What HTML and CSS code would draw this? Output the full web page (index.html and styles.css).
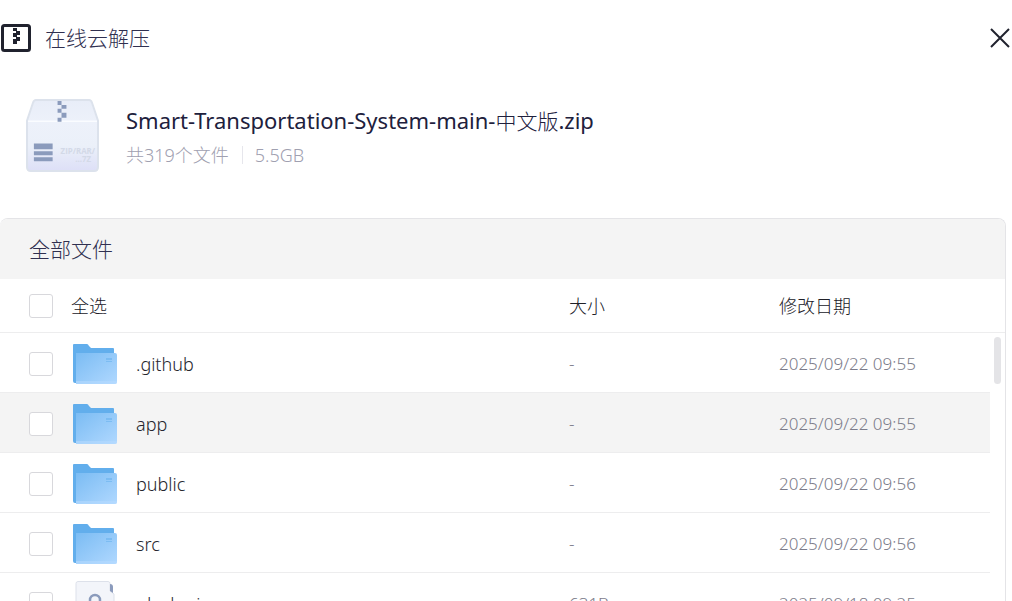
FILE: index.html
```html
<!DOCTYPE html>
<html lang="zh-CN">
<head>
<meta charset="utf-8">
<meta name="viewport" content="width=device-width, initial-scale=1">
<title>在线云解压</title>
<link rel="stylesheet" href="styles.css">
</head>
<body>
<svg class="defs" aria-hidden="true">
  <defs>
    <linearGradient id="folderFront" x1="0" y1="0" x2="1" y2="1">
      <stop offset="0" stop-color="#7bbcf3"/><stop offset="1" stop-color="#b0d8ff"/>
    </linearGradient>
    <symbol id="folder" viewBox="0 0 44 41">
      <path d="M0 2q0-1 1-1h13q1 0 2 2l2 2h22q1 0 1 1v34H2q-2 0-2-2z" fill="#62aeec"/>
      <path d="M3 10h39q2 0 2 2v27q0 2-2 2H3z" fill="url(#folderFront)"/>
      <path d="M3 38h41v1q0 2-2 2H3z" fill="#b5dbff" opacity=".6"/>
      <path d="M33 15h6v2h-6zM33 18h6v1h-6z" fill="#62aeec" opacity=".5"/>
    </symbol>
  </defs>
</svg>
<main class="dialog">
  <header class="titlebar">
    <svg class="logo" viewBox="0 0 30 28" aria-hidden="true">
      <rect x="1.500" y="1.500" width="27" height="25" rx="2" fill="#fff" stroke="#20222e" stroke-width="3"/>
      <path d="M12 4h4v3h3v4h-3v2h3v4h-3v3h-4v-5h3v-2h-3V9h3V7h-3z" fill="#20222e"/>
    </svg>
    <h1 class="heading">在线云解压</h1>
    <button class="close" type="button" aria-label="关闭">
      <svg viewBox="0 0 20 20" aria-hidden="true"><path d="M1 1l18 18M19 1L1 19" stroke="#20222e" stroke-width="2" fill="none"/></svg>
    </button>
  </header>

  <section class="archive">
    <svg class="archive-icon" viewBox="0 0 74 74" aria-hidden="true">
      <defs><linearGradient id="box" x1="0" y1="0" x2="0" y2="1">
        <stop offset="0" stop-color="#e8edf8"/><stop offset=".3" stop-color="#edf1fa"/><stop offset=".65" stop-color="#ebf0f9"/><stop offset="1" stop-color="#dddff7"/>
      </linearGradient></defs>
      <path d="M10 1h54q2 0 3 3l6 18v47q0 4-4 4H5q-4 0-4-4V22L7 4q1-3 3-3z" fill="url(#box)" stroke="#dce2ec" stroke-width="2"/>
      <path d="M2 22.500h70" stroke="#fafcff" stroke-width="1.500"/>
      <path d="M32 2h4v4h-4zM36 6h5v4h-5zM32 10h4v4h-4zM36 14h5v5h-5zM32 19h4v4h-4zM8 45h19v6H8zM8 53h19v4H8zM8 59h19v4H8z" fill="#8b9bbc"/>
      <g class="box-label"><text x="70" y="56" text-anchor="end">ZIP/RAR/</text><text x="66" y="64" text-anchor="end">...7Z</text></g>
    </svg>
    <div class="archive-info">
      <h2 class="archive-name">Smart-Transportation-System-main-<span class="cjk">中文版</span>.zip</h2>
      <p class="archive-meta"><span>共319个文件</span><span class="size">5.5GB</span></p>
    </div>
  </section>

  <section class="panel">
    <h3 class="panel-title">全部文件</h3>
    <table class="files">
      <thead>
        <tr>
          <th class="pick"><input id="all" class="check" type="checkbox"></th>
          <th class="name"><label for="all">全选</label></th>
          <th class="bytes">大小</th>
          <th class="date">修改日期</th>
          <th class="gutter"><span class="thumb"></span></th>
        </tr>
      </thead>
      <tbody>
        <tr>
          <td class="pick"><input id="f1" class="check" type="checkbox"></td>
          <td><label class="file" for="f1"><svg class="folder" aria-hidden="true"><use href="#folder"/></svg>.github</label></td>
          <td class="muted">-</td><td class="muted">2025/09/22 09:55</td>
        </tr>
        <tr class="hovered">
          <td class="pick"><input id="f2" class="check" type="checkbox"></td>
          <td><label class="file" for="f2"><svg class="folder" aria-hidden="true"><use href="#folder"/></svg>app</label></td>
          <td class="muted">-</td><td class="muted">2025/09/22 09:55</td>
        </tr>
        <tr>
          <td class="pick"><input id="f3" class="check" type="checkbox"></td>
          <td><label class="file" for="f3"><svg class="folder" aria-hidden="true"><use href="#folder"/></svg>public</label></td>
          <td class="muted">-</td><td class="muted">2025/09/22 09:56</td>
        </tr>
        <tr>
          <td class="pick"><input id="f4" class="check" type="checkbox"></td>
          <td><label class="file" for="f4"><svg class="folder" aria-hidden="true"><use href="#folder"/></svg>src</label></td>
          <td class="muted">-</td><td class="muted">2025/09/22 09:56</td>
        </tr>
        <tr>
          <td class="pick"><input id="f5" class="check" type="checkbox"></td>
          <td><label class="file" for="f5"><svg class="folder document" viewBox="0 0 44 46" aria-hidden="true">
            <path d="M5 .500h30q2 0 2 2V10l4 3v30q0 2-2 2H5q-2 0-2-2V2.500q0-2 2-2z" fill="#f3f5fa" stroke="#dde1ea"/>
            <path d="M37 3q3 0 3 3v6l-3-2z" fill="#8b9bbc"/>
            <path d="M17 22v-3a5 5 0 0 1 10 0q0 4-3 6-2 1-2 5M22 34v3" fill="none" stroke="#8b9bbc" stroke-width="2.500"/>
          </svg>.dockerignore</label></td>
          <td class="muted">631B</td><td class="muted">2025/09/18 09:25</td>
        </tr>
      </tbody>
    </table>
  </section>
</main>
</body>
</html>
```
FILE: styles.css
```css
* { box-sizing: border-box; }

body {
  margin: 0;
  height: 100vh;
  overflow: hidden;
  background: #fff;
  color: #26262e;
  font-family: "Noto Sans", "Noto Sans CJK SC", sans-serif;
  font-weight: 300;
}

h1, h2, h3, p { margin: 0; font-weight: 300; }

.defs { position: absolute; width: 0; height: 0; }

.dialog { height: 100vh; display: flex; flex-direction: column; }

.titlebar {
  flex: none;
  display: flex;
  align-items: center;
  height: 75px;
  padding: 0 2px 0 1px;
}

.logo { width: 30px; height: 28px; }
.heading { margin-left: 14px; font-size: 21px; line-height: 30px; color: #303050; }

.close {
  width: 20px;
  height: 20px;
  margin-left: auto;
  padding: 0;
  border: 0;
  background: none;
}
.close svg { display: block; }

.archive {
  flex: none;
  display: flex;
  align-items: flex-start;
  gap: 27px;
  height: 143px;
  padding: 24px 26px 0;
}

.archive-icon { flex: none; width: 73px; height: 73px; }
.box-label { font: 700 8px "Open Sans", sans-serif; fill: #d3d9e7; }

.archive-info { padding-top: 5px; }
.archive-name { font-size: 22px; font-weight: 400; line-height: 32px; color: #20203c; }
.cjk { font-size: 21px; font-weight: 300; }
.archive-meta { display: flex; align-items: center; font-size: 18px; line-height: 36px; color: #a0a0b0; }
.size { display: flex; align-items: center; }
.size::before { content: ""; width: 1px; height: 18px; margin: 0 12px 0 13px; background: #e6e6ec; }

.panel {
  flex: 1;
  min-height: 0;
  margin-right: 6px;
  overflow: hidden;
  border: 1px solid #e4e4e7;
  border-width: 1px 1px 0 0;
  border-radius: 8px 8px 0 0;
}

.panel-title {
  height: 60px;
  padding-left: 29px;
  background: #f4f4f4;
  font-size: 21px;
  line-height: 60px;
  color: #303050;
}

.files { width: 100%; table-layout: fixed; border-collapse: separate; border-spacing: 0; font-size: 18px; line-height: 24px; }
.files th, .files td { padding: 0; text-align: left; font-weight: 300; border-bottom: 1px solid #ededee; }
.files th { height: 54px; color: #202028; }
.files td { height: 60px; padding-top: 2px; }
.files .pick { width: 71px; padding-left: 29px; }
.bytes { width: 210px; }
.date { width: 211px; }
.files .gutter { position: relative; width: 15px; }
.files .muted { font-size: 17px; color: #7c7c8a; }
.hovered td { background: #f4f4f4; }

.thumb { position: absolute; top: 58px; right: 4px; width: 7px; height: 47px; border-radius: 4px; background: #e4e4e7; }

.check {
  display: block;
  appearance: none;
  width: 24px;
  height: 24px;
  margin: 0;
  border: 1px solid #d8d8dc;
  border-radius: 3px;
  background: #fff;
}

.file { display: flex; align-items: center; gap: 19px; padding-left: 2px; }
.folder { flex: none; width: 44px; height: 41px; }
.document { height: 46px; }
```
